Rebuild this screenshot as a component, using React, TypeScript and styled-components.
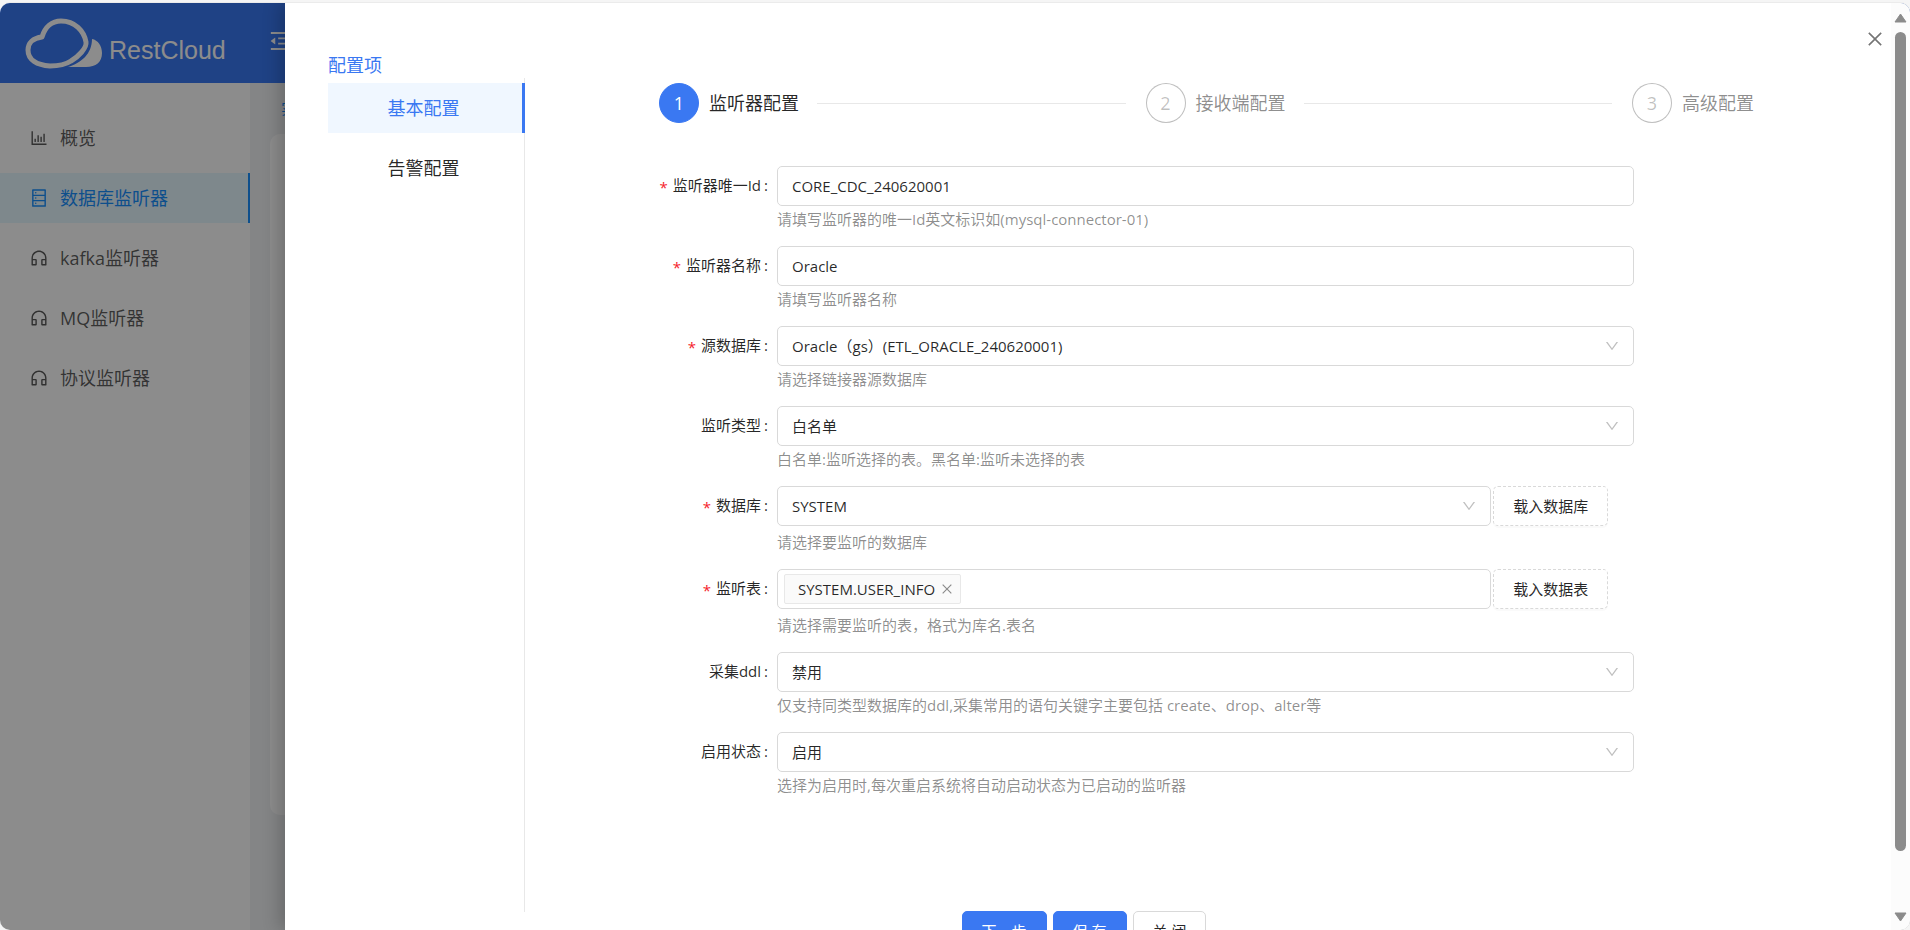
import React from "react";
import styled, { createGlobalStyle, css } from "styled-components";
import {
  AiOutlineBarChart,
  AiOutlineClose,
  AiOutlineCustomerService,
  AiOutlineDatabase,
  AiOutlineDown,
  AiOutlineMenuFold,
} from "react-icons/ai";

const primary = "#3a78f2";
const border = "#d9d9d9";
const text = "rgba(0, 0, 0, 0.85)";
const muted = "rgba(0, 0, 0, 0.45)";

const GlobalStyle = createGlobalStyle`
  *, *::before, *::after { box-sizing: border-box; }
  body {
    margin: 0;
    background: #f5f5f5;
    font-family: "Open Sans", "Noto Sans CJK SC", sans-serif;
    font-size: 15px;
    line-height: 24px;
    color: ${text};
  }
  button, input, select { font: inherit; color: inherit; }
`;

const Frame = styled.div`
  height: 100vh;
  padding-top: 3px;
  overflow: hidden;
`;

const Shell = styled.div`
  position: relative;
  height: 100%;
  overflow: hidden;
  border-radius: 10px;
  background: #f0f2f5;
  box-shadow: 0 -1px 0 #ebebeb;
`;

const Header = styled.header`
  height: 80px;
  padding-bottom: 4px;
  display: flex;
  align-items: center;
  background: ${primary};
  color: #fff;
`;

const Brand = styled.div`
  width: 268px;
  padding: 6px 0 0 25px;
  display: flex;
  align-items: center;
  gap: 7px;
`;

const BrandName = styled.span`
  padding-top: 12px;
  font-family: "Liberation Sans", sans-serif;
  font-size: 25px;
`;

const Columns = styled.div`
  height: calc(100% - 80px);
  display: flex;
`;

const Sider = styled.nav`
  width: 250px;
  padding-top: 30px;
  display: flex;
  flex-direction: column;
  gap: 10px;
  background: #fff;
`;

const SiderLink = styled.a<{ $active?: boolean }>`
  height: 50px;
  padding-left: 29px;
  display: flex;
  align-items: center;
  gap: 11px;
  font-size: 18px;
  text-decoration: none;
  color: rgba(0, 0, 0, 0.65);
  svg { width: 20px; height: 20px; }
  ${(p) =>
    p.$active &&
    css`
      color: #1890ff;
      background: #e6f7ff;
      border-right: 2px solid #1890ff;
    `}
`;

const Content = styled.main`
  flex: 1;
  display: flex;
  flex-direction: column;
  padding: 13px 20px 115px;
`;

const Crumb = styled.a`
  height: 38px;
  padding-left: 11px;
  color: #1890ff;
  text-decoration: none;
`;

const Card = styled.div`
  flex: 1;
  border-radius: 10px;
  background: #fff;
`;

const Mask = styled.div`
  position: absolute;
  inset: 0;
  background: rgba(0, 0, 0, 0.45);
`;

const Drawer = styled.section`
  position: absolute;
  inset: 0 0 0 285px;
  display: flex;
  background: #fff;
  box-shadow: -6px 0 16px rgba(0, 0, 0, 0.2);
`;

const DrawerBody = styled.div`
  flex: 1;
  display: flex;
  align-items: flex-start;
  padding: 50px 137px 0 43px;
  overflow: hidden;
`;

const CloseButton = styled.button`
  position: absolute;
  top: 26px;
  right: 25px;
  width: 20px;
  height: 20px;
  padding: 0;
  border: 0;
  background: none;
  color: #757575;
  svg { display: block; width: 20px; height: 20px; }
`;

const Side = styled.aside`
  width: 197px;
`;

const SideTitle = styled.h2`
  margin: 0;
  height: 25px;
  font-size: 18px;
  line-height: 25px;
  font-weight: 400;
  color: ${primary};
`;

const Tabs = styled.div`
  min-height: 834px;
  padding-top: 5px;
  display: flex;
  flex-direction: column;
  gap: 10px;
  border-right: 1px solid #e8e8e8;
`;

const Tab = styled.button<{ $active?: boolean }>`
  height: 50px;
  margin-right: -1px;
  padding: 0 3px 0 0;
  border: 0;
  border-right: 3px solid ${(p) => (p.$active ? primary : "transparent")};
  background: ${(p) => (p.$active ? "#f0f7ff" : "none")};
  color: ${(p) => (p.$active ? primary : text)};
  font-size: 18px;
`;

const Panel = styled.div`
  flex: 1;
  padding: 30px 0 0 134px;
`;

const Steps = styled.ol`
  margin: 0;
  padding: 0;
  display: flex;
  gap: 20px;
  list-style: none;
`;

const Step = styled.li<{ $last?: boolean }>`
  flex: ${(p) => (p.$last ? "none" : "1")};
  display: flex;
  align-items: center;
  font-size: 18px;
`;

const StepDot = styled.span<{ $active?: boolean }>`
  width: 40px;
  height: 40px;
  margin-right: 10px;
  display: grid;
  place-items: center;
  border-radius: 50%;
  border: 1px solid ${(p) => (p.$active ? primary : "rgba(0, 0, 0, 0.25)")};
  background: ${(p) => (p.$active ? primary : "#fff")};
  color: ${(p) => (p.$active ? "#fff" : "rgba(0, 0, 0, 0.25)")};
`;

const StepTitle = styled.span<{ $active?: boolean }>`
  color: ${(p) => (p.$active ? text : muted)};
`;

const StepLine = styled.span`
  flex: 1;
  height: 1px;
  margin-left: 18px;
  background: #e8e8e8;
`;

const Form = styled.form`
  padding-top: 43px;
`;

const Row = styled.div`
  display: flex;
  align-items: flex-start;
  padding: 0 120px 14px 0;
`;

const Label = styled.label<{ $required?: boolean }>`
  width: 118px;
  padding-right: 9px;
  line-height: 38px;
  text-align: right;
  white-space: nowrap;
  ${(p) =>
    p.$required &&
    css`
      &::before {
        content: "*";
        margin-right: 5px;
        vertical-align: -2px;
        color: #f5222d;
      }
    `}
  &::after {
    content: ":";
    margin-left: 3px;
  }
`;

const Field = styled.div`
  flex: 1;
  min-width: 0;
`;

const Line = styled.div<{ $tall?: boolean }>`
  height: ${(p) => (p.$tall ? "43px" : "40px")};
  display: flex;
  align-items: flex-start;
  gap: 2px;
`;

const controlBox = css`
  width: 100%;
  height: 40px;
  border: 1px solid ${border};
  border-radius: 5px;
  background: #fff;
`;

const TextInput = styled.input`
  ${controlBox}
  padding: 0 14px;
`;

const SelectBox = styled.div<{ $narrow?: boolean }>`
  position: relative;
  width: ${(p) => (p.$narrow ? "calc(100% * 5 / 6)" : "100%")};
  svg {
    position: absolute;
    top: 12px;
    right: 14px;
    width: 16px;
    height: 16px;
    color: rgba(0, 0, 0, 0.25);
    pointer-events: none;
  }
`;

const Select = styled.select`
  ${controlBox}
  padding: 0 40px 0 14px;
  appearance: none;
`;

const TagBox = styled.div`
  ${controlBox}
  width: calc(100% * 5 / 6);
  padding: 0 6px;
  display: flex;
  align-items: center;
`;

const Tag = styled.span`
  height: 30px;
  padding: 0 6px 0 13px;
  display: flex;
  align-items: center;
  gap: 5px;
  border: 1px solid #e8e8e8;
  border-radius: 2px;
  background: #fafafa;
`;

const TagRemove = styled.button`
  padding: 0;
  border: 0;
  background: none;
  color: ${muted};
  svg { display: block; width: 14px; height: 14px; }
`;

const TagInput = styled.input`
  flex: 1;
  min-width: 0;
  border: 0;
  outline: 0;
  background: none;
`;

const DashedButton = styled.button`
  height: 40px;
  padding: 0 19px;
  border: 1px dashed ${border};
  border-radius: 5px;
  background: #fff;
  box-shadow: 0 2px 0 rgba(0, 0, 0, 0.02);
  white-space: nowrap;
`;

const Help = styled.p`
  margin: 0;
  line-height: 26px;
  color: ${muted};
`;

const Actions = styled.div`
  display: flex;
  justify-content: center;
  gap: 6px;
  padding: 99px 245px 0 0;
`;

const ActionButton = styled.button<{ $primary?: boolean }>`
  height: 40px;
  padding: 0 19px;
  border: 1px solid ${(p) => (p.$primary ? primary : border)};
  border-radius: 5px;
  background: ${(p) => (p.$primary ? primary : "#fff")};
  color: ${(p) => (p.$primary ? "#fff" : text)};
`;

const ScrollTrack = styled.div`
  width: 19px;
  padding: 10px 0 8px;
  display: flex;
  flex-direction: column;
  align-items: center;
  gap: 9px;
  background: #fcfcfc;
  svg { flex: none; display: block; }
`;

const ScrollRail = styled.div`
  flex: 1;
  width: 11px;
`;

const ScrollThumb = styled.div`
  height: 94%;
  border-radius: 6px;
  background: #8b8b8b;
`;

const Logo = () => (
  <svg width="77" height="52" viewBox="0 0 77 52" fill="none" aria-hidden="true">
    <path
      d="M17 19 C20 9 27 3 36 3 C50 3 59 13 61 24 C62 30 53 39 46 43 C40 47 34 48 25 48 C12 47 3 42 3 32 C3 25 8 20 17 19 Z"
      stroke="#fff"
      strokeWidth="5"
      strokeLinejoin="round"
    />
    <path d="M67 21 C73 22 77 28 77 35 C77 44 71 49 61 49 L43 49 C56 45 67 36 67 21 Z" fill="#fff" />
  </svg>
);

const Arrow = ({ down }: { down?: boolean }) => (
  <svg width="13" height="10" viewBox="0 0 13 10" aria-hidden="true">
    <path
      d={down ? "M1 1 H12 L6.500 9 Z" : "M1 9 H12 L6.500 1 Z"}
      fill="#8b8b8b"
      stroke="#8b8b8b"
      strokeWidth="1"
      strokeLinejoin="round"
    />
  </svg>
);

const menu = [
  { name: "概览", Icon: AiOutlineBarChart },
  { name: "数据库监听器", Icon: AiOutlineDatabase, active: true },
  { name: "kafka监听器", Icon: AiOutlineCustomerService },
  { name: "MQ监听器", Icon: AiOutlineCustomerService },
  { name: "协议监听器", Icon: AiOutlineCustomerService },
];

const steps = ["监听器配置", "接收端配置", "高级配置"];

type FieldSpec = {
  id: string;
  label: string;
  kind: "text" | "select" | "tags";
  value: string;
  help: string;
  required?: boolean;
  action?: string;
};

const fields: FieldSpec[] = [
  { id: "uid", label: "监听器唯一Id", kind: "text", value: "CORE_CDC_240620001", help: "请填写监听器的唯一Id英文标识如(mysql-connector-01)", required: true },
  { id: "name", label: "监听器名称", kind: "text", value: "Oracle", help: "请填写监听器名称", required: true },
  { id: "source", label: "源数据库", kind: "select", value: "Oracle（gs）(ETL_ORACLE_240620001)", help: "请选择链接器源数据库", required: true },
  { id: "type", label: "监听类型", kind: "select", value: "白名单", help: "白名单:监听选择的表。黑名单:监听未选择的表" },
  { id: "database", label: "数据库", kind: "select", value: "SYSTEM", help: "请选择要监听的数据库", required: true, action: "载入数据库" },
  { id: "tables", label: "监听表", kind: "tags", value: "SYSTEM.USER_INFO", help: "请选择需要监听的表，格式为库名.表名", required: true, action: "载入数据表" },
  { id: "ddl", label: "采集ddl", kind: "select", value: "禁用", help: "仅支持同类型数据库的ddl,采集常用的语句关键字主要包括 create、drop、alter等" },
  { id: "status", label: "启用状态", kind: "select", value: "启用", help: "选择为启用时,每次重启系统将自动启动状态为已启动的监听器" },
];

const Control = ({ field }: { field: FieldSpec }) => {
  if (field.kind === "text") return <TextInput id={field.id} defaultValue={field.value} />;
  if (field.kind === "tags")
    return (
      <TagBox>
        <Tag>
          {field.value}
          <TagRemove type="button" aria-label="移除">
            <AiOutlineClose />
          </TagRemove>
        </Tag>
        <TagInput id={field.id} />
      </TagBox>
    );
  return (
    <SelectBox $narrow={!!field.action}>
      <Select id={field.id}>
        <option>{field.value}</option>
      </Select>
      <AiOutlineDown />
    </SelectBox>
  );
};

export default function App() {
  return (
    <Frame>
      <GlobalStyle />
      <Shell>
        <Header>
          <Brand>
            <Logo />
            <BrandName>RestCloud</BrandName>
          </Brand>
          <AiOutlineMenuFold size={26} />
        </Header>
        <Columns>
          <Sider>
            {menu.map(({ name, Icon, active }) => (
              <SiderLink key={name} href="#" $active={active}>
                <Icon />
                {name}
              </SiderLink>
            ))}
          </Sider>
          <Content>
            <Crumb href="#">实</Crumb>
            <Card />
          </Content>
        </Columns>
        <Mask />
        <Drawer>
          <DrawerBody>
            <Side>
              <SideTitle>配置项</SideTitle>
              <Tabs>
                <Tab $active>基本配置</Tab>
                <Tab>告警配置</Tab>
              </Tabs>
            </Side>
            <Panel>
              <Steps>
                {steps.map((title, i) => (
                  <Step key={title} $last={i === steps.length - 1}>
                    <StepDot $active={i === 0}>{i + 1}</StepDot>
                    <StepTitle $active={i === 0}>{title}</StepTitle>
                    {i < steps.length - 1 && <StepLine />}
                  </Step>
                ))}
              </Steps>
              <Form onSubmit={(e) => e.preventDefault()}>
                {fields.map((field) => (
                  <Row key={field.id}>
                    <Label htmlFor={field.id} $required={field.required}>
                      {field.label}
                    </Label>
                    <Field>
                      <Line $tall={!!field.action}>
                        <Control field={field} />
                        {field.action && <DashedButton type="button">{field.action}</DashedButton>}
                      </Line>
                      <Help>{field.help}</Help>
                    </Field>
                  </Row>
                ))}
                <Actions>
                  <ActionButton type="submit" $primary>下一步</ActionButton>
                  <ActionButton type="button" $primary>保 存</ActionButton>
                  <ActionButton type="button">关 闭</ActionButton>
                </Actions>
              </Form>
            </Panel>
          </DrawerBody>
          <ScrollTrack>
            <Arrow />
            <ScrollRail>
              <ScrollThumb />
            </ScrollRail>
            <Arrow down />
          </ScrollTrack>
          <CloseButton aria-label="关闭">
            <AiOutlineClose />
          </CloseButton>
        </Drawer>
      </Shell>
    </Frame>
  );
}
